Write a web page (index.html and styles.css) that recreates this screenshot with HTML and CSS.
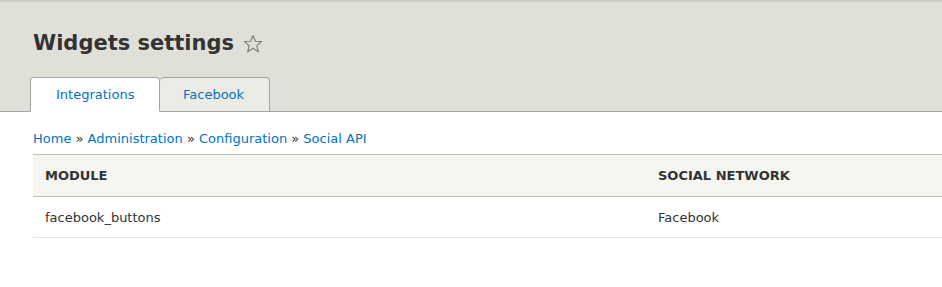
FILE: index.html
```html
<!DOCTYPE html>
<html lang="en">
<head>
<meta charset="UTF-8" />
<title>Widgets settings</title>
<link rel="stylesheet" href="styles.css">
</head>
<body>
<header class="page-header">
  <h1 class="page-title">
    Widgets settings
    <svg class="shortcut-star" width="20" height="20" viewBox="0 0 20 20" aria-hidden="true">
      <polygon points="10,1.5 12.4,7.3 18.6,7.6 13.8,11.6 15.4,17.8 10,14.3 4.6,17.8 6.2,11.6 1.4,7.6 7.6,7.3" fill="none" stroke="#7d7d73" stroke-width="1.1" stroke-linejoin="round"/>
    </svg>
  </h1>
  <nav class="tabs">
    <a class="tab is-active" href="#">Integrations</a>
    <a class="tab" href="#">Facebook</a>
  </nav>
</header>

<main class="content">
  <div class="breadcrumb">
    <a href="#">Home</a> » <a href="#">Administration</a> » <a href="#">Configuration</a> » <a href="#">Social API</a>
  </div>
  <table class="data-table">
    <thead>
      <tr>
        <th class="col-module">Module</th>
        <th>Social network</th>
      </tr>
    </thead>
    <tbody>
      <tr>
        <td>facebook_buttons</td>
        <td>Facebook</td>
      </tr>
    </tbody>
  </table>
</main>
</body>
</html>
```

FILE: styles.css
```css
/* Reset & base */
* {
  box-sizing: border-box;
}
html, body {
  margin: 0;
  padding: 0;
  background: #fff;
  color: #333;
  font-family: "DejaVu Sans", Verdana, sans-serif;
  font-size: 13px;
  overflow: hidden;
}
a {
  color: #0074bd;
  text-decoration: none;
}

/* Header */
.page-header {
  background: #e0e0d8;
  border-top: 2px solid #cdcdc6;
  border-bottom: 1px solid #a6a6a6;
  padding: 0 0 0 30px;
}
.page-title {
  margin: 0;
  padding: 26px 0 0 3px;
  font-size: 21px;
  font-weight: 700;
  line-height: 30px;
  color: #333;
  display: flex;
  align-items: center;
  gap: 9px;
}
.shortcut-star {
  display: block;
  margin-top: 1px;
}

.tabs {
  display: flex;
  margin-top: 19px;
  margin-bottom: -1px;
}
.tab {
  display: block;
  width: 110px;
  height: 35px;
  line-height: 33px;
  padding: 0 0 0 23px;
  background: #ecece6;
  border: 1px solid #a6a6a6;
  border-left: none;
  border-radius: 4px 4px 0 0;
  font-size: 13px;
  white-space: nowrap;
}
.tab.is-active {
  width: 130px;
  background: #fff;
  border-left: 1px solid #a6a6a6;
  border-bottom-color: #fff;
  padding-left: 25px;
}

/* Content */
.content {
  padding: 18px 0 0 33px;
}
.breadcrumb {
  color: #333;
  line-height: 18px;
  margin-bottom: 6px;
}
.data-table {
  width: 960px;
  border-collapse: collapse;
}
.data-table th {
  background: #f5f5f2;
  border-top: 1px solid #bfbfba;
  border-bottom: 1px solid #bfbfba;
  text-align: left;
  text-transform: uppercase;
  font-weight: 700;
  font-size: 13px;
  height: 42px;
  padding: 0 12px;
}
.data-table .col-module {
  width: 613px;
}
.data-table td {
  border-bottom: 1px solid #e6e4df;
  height: 41px;
  padding: 0 12px;
}
```
